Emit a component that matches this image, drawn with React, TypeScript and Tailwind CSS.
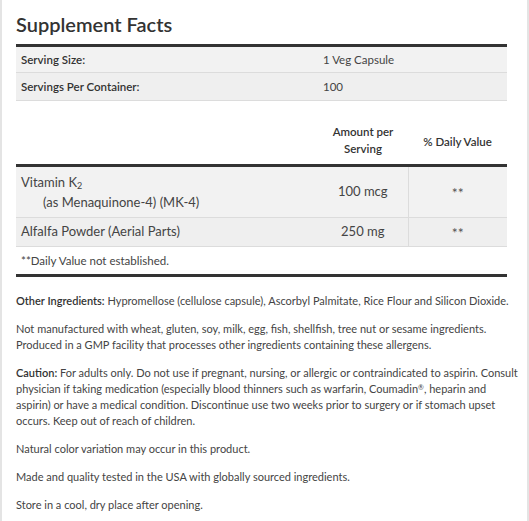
export default function App() {
  return (
    <div
      className="w-[529px] h-[521px] overflow-hidden bg-white border-x-2 border-[#e4e4e4] text-[#444]"
      style={{ fontFamily: 'Lato, "Noto Sans", sans-serif' }}
    >
      <div className="pl-[14px] pr-[20px] pt-[12px]">
        <h2 className="text-[20px] font-semibold text-[#333] leading-[24px] mb-[8px]">Supplement Facts</h2>

        <table className="w-full border-collapse border-t-[3px] border-[#333] text-[11.5px]">
          <tbody>
            <tr className="bg-[#f2f2f2] border-b border-[#dcdcdc] h-[27px]">
              <td className="pl-[5px] font-semibold text-[#333] w-[302px]">Serving Size:</td>
              <td className="pl-[5px]" colSpan={2}>1 Veg Capsule</td>
            </tr>
            <tr className="bg-[#efefef] border-b border-[#dcdcdc] h-[28px]">
              <td className="pl-[5px] font-semibold text-[#333]">Servings Per Container:</td>
              <td className="pl-[5px]" colSpan={2}>100</td>
            </tr>
          </tbody>
        </table>

        <table className="w-full border-collapse mt-[22px]">
          <thead>
            <tr className="border-b-[3px] border-[#333]">
              <th className="w-[302px]"></th>
              <th className="w-[90px] pb-[7px] text-[11.5px] font-semibold text-[#333] leading-[17px]">
                Amount per
                <br />
                Serving
              </th>
              <th className="pb-[7px] pt-[4px] text-[11.5px] font-semibold text-[#333] align-middle">% Daily Value</th>
            </tr>
          </thead>
          <tbody className="text-[13px]">
            <tr className="bg-[#f2f2f2] border-b border-[#dcdcdc]">
              <td className="pl-[5px] py-[5px] leading-[20px]">
                <div>
                  Vitamin K<sub className="text-[9px]">2</sub>
                </div>
                <div className="pl-[22px]">(as Menaquinone-4) (MK-4)</div>
              </td>
              <td className="text-center">100 mcg</td>
              <td className="text-center border-l border-[#dcdcdc] text-[14px] text-[#555]">**</td>
            </tr>
            <tr className="bg-[#efefef] border-b border-[#dcdcdc] h-[29px]">
              <td className="pl-[5px]">Alfalfa Powder (Aerial Parts)</td>
              <td className="text-center">250 mg</td>
              <td className="text-center border-l border-[#dcdcdc] text-[14px] text-[#555]">**</td>
            </tr>
            <tr className="border-b-[3px] border-[#333] h-[29px]">
              <td className="pl-[5px] text-[11.5px]" colSpan={3}>**Daily Value not established.</td>
            </tr>
          </tbody>
        </table>

        <div className="mt-[16px] -mr-[18px] text-[11px] leading-[16px] space-y-[12px]">
          <p>
            <span className="font-semibold text-[#333]">Other Ingredients:</span> Hypromellose (cellulose capsule), Ascorbyl Palmitate, Rice Flour and Silicon Dioxide.
          </p>
          <p>
            Not manufactured with wheat, gluten, soy, milk, egg, fish, shellfish, tree nut or sesame ingredients.
            <br />
            Produced in a GMP facility that processes other ingredients containing these allergens.
          </p>
          <p>
            <span className="font-semibold text-[#333]">Caution:</span> For adults only. Do not use if pregnant, nursing, or allergic or contraindicated to aspirin. Consult
            <br />
            physician if taking medication (especially blood thinners such as warfarin, Coumadin<sup className="text-[7px]">®</sup>, heparin and
            <br />
            aspirin) or have a medical condition. Discontinue use two weeks prior to surgery or if stomach upset
            <br />
            occurs. Keep out of reach of children.
          </p>
          <p>Natural color variation may occur in this product.</p>
          <p>Made and quality tested in the USA with globally sourced ingredients.</p>
          <p>Store in a cool, dry place after opening.</p>
        </div>
      </div>
    </div>
  );
}
